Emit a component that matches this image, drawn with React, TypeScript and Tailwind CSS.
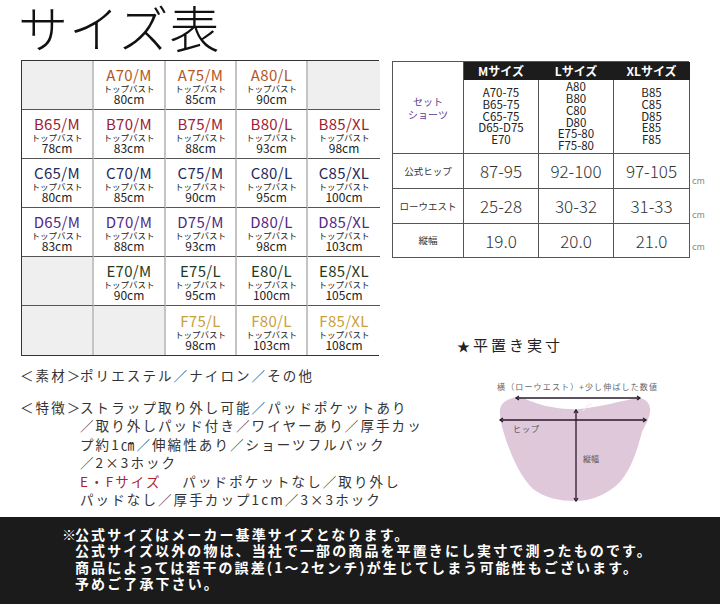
import React from 'react';

type Cell = { size: string; bust: number; color: string } | null;

const A = 'text-[#b5561e]';
const B = 'text-[#9e1b32]';
const C = 'text-[#1f2a5a]';
const D = 'text-[#512a85]';
const E = 'text-[#1f3b22]';
const F = 'text-[#c9a03a]';

const grid: Cell[][] = [
  [null, { size: 'A70/M', bust: 80, color: A }, { size: 'A75/M', bust: 85, color: A }, { size: 'A80/L', bust: 90, color: A }, null],
  [
    { size: 'B65/M', bust: 78, color: B },
    { size: 'B70/M', bust: 83, color: B },
    { size: 'B75/M', bust: 88, color: B },
    { size: 'B80/L', bust: 93, color: B },
    { size: 'B85/XL', bust: 98, color: B },
  ],
  [
    { size: 'C65/M', bust: 80, color: C },
    { size: 'C70/M', bust: 85, color: C },
    { size: 'C75/M', bust: 90, color: C },
    { size: 'C80/L', bust: 95, color: C },
    { size: 'C85/XL', bust: 100, color: C },
  ],
  [
    { size: 'D65/M', bust: 83, color: D },
    { size: 'D70/M', bust: 88, color: D },
    { size: 'D75/M', bust: 93, color: D },
    { size: 'D80/L', bust: 98, color: D },
    { size: 'D85/XL', bust: 103, color: D },
  ],
  [
    null,
    { size: 'E70/M', bust: 90, color: E },
    { size: 'E75/L', bust: 95, color: E },
    { size: 'E80/L', bust: 100, color: E },
    { size: 'E85/XL', bust: 105, color: E },
  ],
  [null, null, { size: 'F75/L', bust: 98, color: F }, { size: 'F80/L', bust: 103, color: F }, { size: 'F85/XL', bust: 108, color: F }],
];

const SizeGrid = () => (
  <div className="grid w-[358px] grid-cols-[72px_72px_71px_71px_72px] border border-[#333]">
    {grid.map((row, r) =>
      row.map((cell, c) => (
        <div
          key={`${r}-${c}`}
          className={`flex h-[49px] flex-col items-center justify-center pt-[2px] ${
            c < 4 ? 'border-r-2 border-r-[#c4c4c4]' : ''
          } ${r < 5 ? 'border-b border-b-[#555]' : ''} ${cell ? 'bg-white' : 'bg-[#efefef]'}`}
        >
          {cell && (
            <>
              <span className={`text-[15px] leading-[15px] tracking-[0.3px] ${cell.color}`}>{cell.size}</span>
              <span className="mt-[1px] text-[8.5px] leading-[10px] text-[#222]">トップバスト</span>
              <span className="text-[12px] leading-[12px] text-[#222]">{cell.bust}cm</span>
            </>
          )}
        </div>
      ))
    )}
  </div>
);

const cellB = 'border-r border-b border-[#555]';

const ShortsTable = () => (
  <div className="flex">
    <div className="grid w-[297px] grid-cols-[71px_75px_75px_76px] grid-rows-[18px_74px_35px_35px_34px] border-t border-l border-[#555] text-[#222]">
      <div className={`${cellB} row-span-2 flex flex-col items-center justify-center text-[10px] leading-[13px] text-[#5b3c8c]`}>
        <span>セット</span>
        <span>ショーツ</span>
      </div>
      {['Mサイズ', 'Lサイズ', 'XLサイズ'].map((h) => (
        <div key={h} className="flex items-center justify-center border-r border-b border-[#1c1c1c] bg-[#1c1c1c] text-[12px] font-bold text-white">
          {h}
        </div>
      ))}
      {[
        ['A70-75', 'B65-75', 'C65-75', 'D65-D75', 'E70'],
        ['A80', 'B80', 'C80', 'D80', 'E75-80', 'F75-80'],
        ['B85', 'C85', 'D85', 'E85', 'F85'],
      ].map((list, i) => (
        <div key={i} className={`${cellB} flex flex-col items-center justify-center text-[11.5px] leading-[11.8px]`}>
          {list.map((s) => (
            <span key={s}>{s}</span>
          ))}
        </div>
      ))}
      {[
        ['公式ヒップ', '87-95', '92-100', '97-105'],
        ['ローウエスト', '25-28', '30-32', '31-33'],
        ['縦幅', '19.0', '20.0', '21.0'],
      ].map((row) =>
        row.map((v, i) => (
          <div
            key={row[0] + i}
            className={`${cellB} flex items-center justify-center ${
              i === 0 ? 'text-[9.5px] text-[#333]' : 'text-[17px] font-light text-[#333]'
            }`}
          >
            {v}
          </div>
        ))
      )}
    </div>
    <div className="ml-[3px] grid grid-rows-[18px_74px_35px_35px_34px] text-[9px] text-[#888]">
      <div />
      <div />
      <div className="flex items-end pb-[1px]">cm</div>
      <div className="flex items-end pb-[2px]">cm</div>
      <div className="flex items-end pb-[4px]">cm</div>
    </div>
  </div>
);

const Diagram = () => (
  <svg width="190" height="130" viewBox="480 375 190 130" className="ml-[88px] block">
    <path
      d="M500 412 C499 405 503 399 510 397 C516 394 522 395 530 399 C545 405 565 408 580 407 C600 405 620 399 638 396 C646 396 651 402 650 410 C649 418 645 423 642 430 C637 448 632 466 620 480 C608 492 592 499 575 499 C560 499 545 496 533 487 C520 474 512 455 506 438 C503 428 500 420 500 412 Z"
      fill="#dec8da"
    />
    <path d="M583 409 L589 401 M586 405 L592 402" stroke="#f4eef3" strokeWidth="1" />
    <text x="497" y="388" fontSize="8" fill="#666" textLength="160" fontFamily="Noto Sans CJK JP, sans-serif">
      横（ローウエスト）+少し伸ばした数値
    </text>
    <g stroke="#2a1a2a" strokeWidth="1.3" fill="none">
      <line x1="516" y1="396" x2="640" y2="396" />
      <polyline points="519,394 516,396 519,398" />
      <polyline points="637,394 640,396 637,398" />
      <line x1="500" y1="418" x2="646" y2="418" />
      <polyline points="503,416 500,418 503,420" />
      <polyline points="643,416 646,418 643,420" />
      <line x1="576" y1="408" x2="576" y2="499" />
      <polyline points="574,411 576,408 578,411" />
      <polyline points="574,496 576,499 578,496" />
    </g>
    <text x="513" y="430" fontSize="8" fill="#555" letterSpacing="1" fontFamily="Noto Sans CJK JP, sans-serif">
      ヒップ
    </text>
    <text x="583" y="460" fontSize="8" fill="#555" fontFamily="Noto Sans CJK JP, sans-serif">
      縦幅
    </text>
  </svg>
);

export default function App() {
  return (
    <div className="flex h-[604px] w-[720px] flex-col overflow-hidden bg-white font-['Noto_Sans_CJK_JP',sans-serif]">
      <div className="flex h-[517px]">
        <div className="w-[392px] pl-[21px]">
          <div className="h-[60px]">
            <h1 className="-ml-[3px] text-[50px] font-light leading-[52px] tracking-[1px] text-[#111]">サイズ表</h1>
          </div>
          <SizeGrid />
          <div className="mt-[10px] text-[13.5px] leading-[18.4px] tracking-[2.1px] text-[#333]">
            <div className="-ml-[1px] flex whitespace-nowrap">
              <span className="w-[60px]">＜素材＞</span>
              <span>ポリエステル／ナイロン／その他</span>
            </div>
            <div className="-ml-[1px] mt-[13.5px] flex whitespace-nowrap">
              <span className="w-[60px]">＜特徴＞</span>
              <div className="flex flex-col">
                <span>ストラップ取り外し可能／パッドポケットあり</span>
                <span>／取り外しパッド付き／ワイヤーあり／厚手カッ</span>
                <span>プ約1㎝／伸縮性あり／ショーツフルバック</span>
                <span>／2×3ホック</span>
                <span>
                  <span className="text-[#b0232a]">E・Fサイズ</span>　 パッドポケットなし／取り外し
                </span>
                <span>パッドなし／厚手カップ1cm／3×3ホック</span>
              </div>
            </div>
          </div>
        </div>
        <div className="w-[328px] pt-[61px]">
          <ShortsTable />
          <div className="ml-[65px] mt-[77px] text-[15px] leading-[20px] tracking-[3px] text-[#222]">
            <span className="text-[13px]">★</span>平置き実寸
          </div>
          <div className="mt-[21px]">
            <Diagram />
          </div>
        </div>
      </div>
      <div className="flex-1 bg-[#1b1b1b] pl-[62px] pt-[9px] text-[14px] font-bold leading-[16.4px] tracking-[2.1px] text-white">
        <div className="flex">
          <span className="w-[13px] tracking-normal">※</span>
          <div className="flex flex-col whitespace-nowrap">
            <span>公式サイズはメーカー基準サイズとなります。</span>
            <span>公式サイズ以外の物は、当社で一部の商品を平置きにし実寸で測ったものです。</span>
            <span>商品によっては若干の誤差(1～2センチ)が生じてしまう可能性もございます。</span>
            <span>予めご了承下さい。</span>
          </div>
        </div>
      </div>
    </div>
  );
}
